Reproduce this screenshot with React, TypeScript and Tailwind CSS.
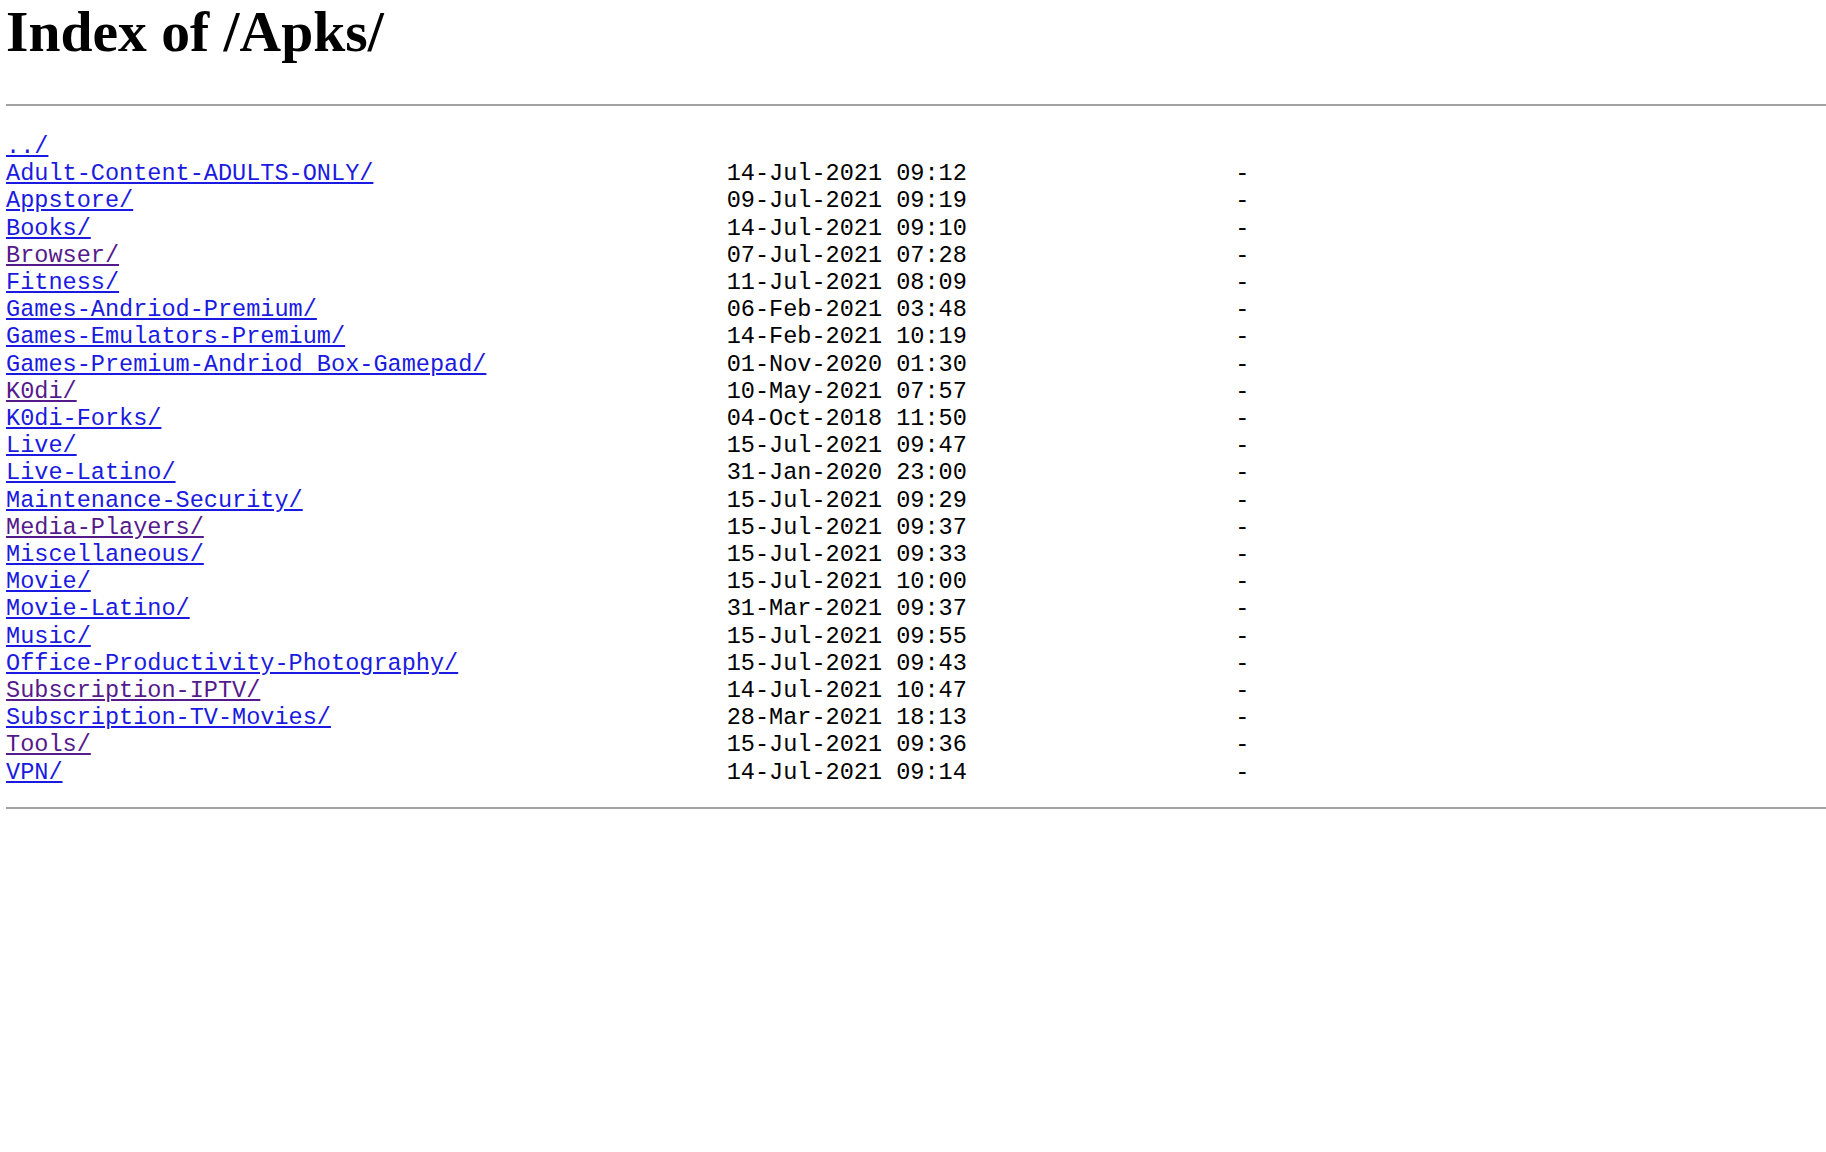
import React from "react";

type Entry = { name: string; date?: string; visited?: boolean };

const entries: Entry[] = [
  { name: "../" },
  { name: "Adult-Content-ADULTS-ONLY/", date: "14-Jul-2021 09:12" },
  { name: "Appstore/", date: "09-Jul-2021 09:19" },
  { name: "Books/", date: "14-Jul-2021 09:10" },
  { name: "Browser/", date: "07-Jul-2021 07:28", visited: true },
  { name: "Fitness/", date: "11-Jul-2021 08:09" },
  { name: "Games-Andriod-Premium/", date: "06-Feb-2021 03:48" },
  { name: "Games-Emulators-Premium/", date: "14-Feb-2021 10:19" },
  { name: "Games-Premium-Andriod Box-Gamepad/", date: "01-Nov-2020 01:30" },
  { name: "K0di/", date: "10-May-2021 07:57", visited: true },
  { name: "K0di-Forks/", date: "04-Oct-2018 11:50" },
  { name: "Live/", date: "15-Jul-2021 09:47" },
  { name: "Live-Latino/", date: "31-Jan-2020 23:00" },
  { name: "Maintenance-Security/", date: "15-Jul-2021 09:29" },
  { name: "Media-Players/", date: "15-Jul-2021 09:37", visited: true },
  { name: "Miscellaneous/", date: "15-Jul-2021 09:33" },
  { name: "Movie/", date: "15-Jul-2021 10:00" },
  { name: "Movie-Latino/", date: "31-Mar-2021 09:37" },
  { name: "Music/", date: "15-Jul-2021 09:55" },
  { name: "Office-Productivity-Photography/", date: "15-Jul-2021 09:43" },
  { name: "Subscription-IPTV/", date: "14-Jul-2021 10:47", visited: true },
  { name: "Subscription-TV-Movies/", date: "28-Mar-2021 18:13" },
  { name: "Tools/", date: "15-Jul-2021 09:36", visited: true },
  { name: "VPN/", date: "14-Jul-2021 09:14" },
];

const App = () => {
  return (
    <div className="min-h-[1152px] bg-white pl-[6px] text-black">
      <h1 className="m-0 pt-[3px] text-[57.6px] leading-[58px] font-bold font-['Liberation_Serif','Times_New_Roman',serif]">
        Index of /Apks/
      </h1>
      <div className="mt-[43px] h-[2px] bg-[#a2a2a2]" />
      <pre className="mt-[27px] mb-0 font-['Liberation_Mono','Courier_New',monospace] text-[23.55px] leading-[27.2px] whitespace-pre">
        {entries.map((e) => (
          <div key={e.name}>
            <a
              href="#"
              className={
                e.visited
                  ? "text-[#551a8b] underline"
                  : "text-[#1a1ae0] underline"
              }
            >
              {e.name}
            </a>
            {e.date
              ? " ".repeat(51 - e.name.length) + e.date + " ".repeat(19) + "-"
              : ""}
          </div>
        ))}
      </pre>
      <div className="mt-[21px] h-[2px] bg-[#a2a2a2]" />
    </div>
  );
};

export default App;
